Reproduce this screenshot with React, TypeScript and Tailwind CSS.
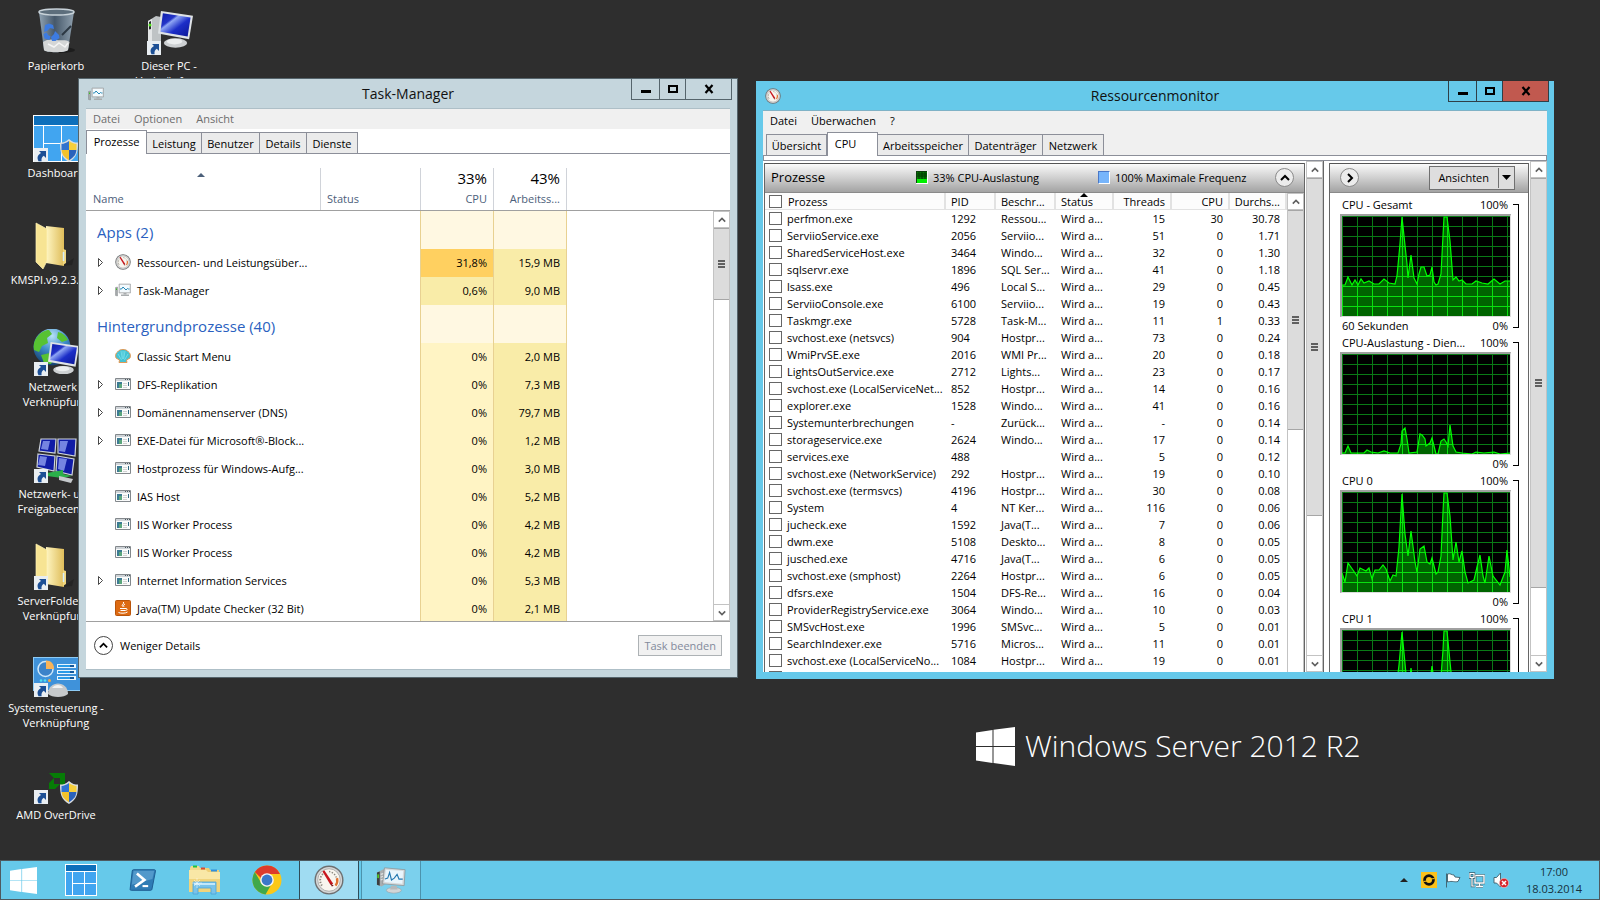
import { useId, useState } from "react";
import type { ReactNode } from "react";
import { clsx } from "clsx";

type IconProps = { className?: string };

/* ---------- Icons ---------- */

function ShortcutArrow() {
  return (
    <g>
      <rect x="2" y="33" width="14" height="14" fill="#e9eef2" />
      <path d="M7 36h7v7l-2.200-2.200c-2 1.200-2.600 3-2.200 5.400H6.500c-2-4-.5-6.500 2.500-8.200z" fill="#1c4f95" />
    </g>
  );
}

function Shield() {
  return (
    <g>
      <path d="M37 24c3 3 6 3.500 9 3.500 0 9-1 15-9 19.500-8-4.500-9-10.500-9-19.500 3 0 6-.5 9-3.500z" fill="#d9dde0" />
      <path d="M37 26c-2.500 2-5 2.700-7.500 2.900V35H37z" fill="#2f72cf" />
      <path d="M37 26c2.500 2 5 2.700 7.500 2.900V35H37z" fill="#f6cf3c" />
      <path d="M29.600 35H37v10.200C31.500 42 30 39 29.600 35z" fill="#f3c22c" />
      <path d="M44.400 35H37v10.200C42.500 42 44 39 44.400 35z" fill="#2a62bb" />
    </g>
  );
}

function RecycleBinIcon({ className }: IconProps) {
  const id = useId();
  return (
    <svg className={className} viewBox="0 0 48 48" aria-hidden="true">
      <defs>
        <linearGradient id={id} x1="0" x2="1">
          <stop offset="0" stopColor="#90a3b3" />
          <stop offset=".45" stopColor="#46586a" />
          <stop offset="1" stopColor="#8fa0ae" />
        </linearGradient>
      </defs>
      <ellipse cx="28" cy="42" rx="15" ry="3" fill="#1d1d1d" />
      <path d="M7 4l5 38c1 3 22 3 24 0l6-38z" fill={`url(#${id})`} />
      <path d="M11 34l1 8c1 3 22 3 24 0l1.500-8c-4-3-9-1-13-2s-10-1-13.500 2z" fill="#d4d6d6" />
      <path d="M16 36l6 3 5-4 6 4 3-4" stroke="#f4f4f4" fill="none" strokeWidth="1.500" />
      <path d="M39 18l-9 9" stroke="#2c3843" strokeWidth="2" />
      <path d="M13 17l4-1.500 4 1.500 1 4-4-1-3 3-3 1zM11.500 26l3-1.500 2 3 2 .5-1 4-5-1.500zM20 33l-1-4 3-3 1-3 4 4 .5 3-4 3z" fill="#3d7be0" />
      <ellipse cx="24.500" cy="4" rx="17.500" ry="3" fill="#5d6e7c" stroke="#c8d2d9" strokeWidth="1.500" />
    </svg>
  );
}

function Monitor({ x, y, w, h }: { x: number; y: number; w: number; h: number }) {
  const id = useId();
  return (
    <g transform={`translate(${x} ${y}) scale(${w / 36} ${h / 34})`}>
      <defs>
        <linearGradient id={id} x1="0" y1="0" x2="1" y2="1">
          <stop offset="0" stopColor="#0a1aa8" />
          <stop offset=".3" stopColor="#2434c8" />
          <stop offset=".36" stopColor="#8fa6f4" />
          <stop offset=".6" stopColor="#1c2ec8" />
          <stop offset="1" stopColor="#0b1694" />
        </linearGradient>
      </defs>
      <path d="M3 0l33 5-4 25L0 24z" fill="#dfe3e6" />
      <path d="M5 2.500l28.500 4.300L30.500 27 2.500 22z" fill={`url(#${id})`} />
      <ellipse cx="18" cy="34" rx="12" ry="5" fill="#cdd0d2" />
      <ellipse cx="17" cy="32.500" rx="8" ry="3" fill="#eceeef" />
    </g>
  );
}

function ComputerIcon({ className }: IconProps) {
  return (
    <svg className={className} viewBox="0 0 48 48" aria-hidden="true">
      <path d="M3 13l8-5 5 1v32l-5 2-8-3z" fill="#bfc3c5" />
      <path d="M3 13l4-2v29l-4-1z" fill="#e4e6e7" />
      <path d="M4 14l2-1v8l-2 .5z" fill="#2a2d2f" />
      <circle cx="5" cy="17" r="1.500" fill="#53e21b" />
      <Monitor x={13} y={3} w={35} h={32} />
      <ShortcutArrow />
    </svg>
  );
}

function DashboardIcon({ className }: IconProps) {
  return (
    <svg className={className} viewBox="0 0 48 48" aria-hidden="true">
      <rect x="1" y="0" width="47" height="47" fill="#fff" />
      <rect x="2" y="1" width="46" height="9" fill="#0d6fbb" />
      <path d="M2 11h9v35H2zM12 11h17v17H12zM30 11h18v17H30zM12 29h17v17H12zM30 29h18v17H30z" fill="#41a5f0" />
      <ShortcutArrow />
      <Shield />
    </svg>
  );
}

function FolderIcon({ className, shortcut }: IconProps & { shortcut?: boolean }) {
  const id = useId();
  return (
    <svg className={className} viewBox="0 0 48 48" aria-hidden="true">
      <defs>
        <linearGradient id={id} x1="0" x2="1">
          <stop offset="0" stopColor="#fdf3bd" />
          <stop offset="1" stopColor="#dfbd5a" />
        </linearGradient>
      </defs>
      <path d="M30 44l12-8-2 7z" fill="#242424" />
      <path d="M14 4l18 2v38l-18-3z" fill={`url(#${id})`} />
      <path d="M4 1l11 6v32l-4 8-7-7z" fill="#f7e493" stroke="#fff3b8" strokeWidth=".7" />
      <path d="M15 7l17 1v34l-17-3z" fill={`url(#${id})`} />
      <path d="M31 27l3 1v13l-3 2z" fill="#f0d67d" />
      <path d="M31.500 30v9" stroke="#d5effc" strokeWidth="1.500" />
      {shortcut && <ShortcutArrow />}
    </svg>
  );
}

function NetworkIcon({ className }: IconProps) {
  const id = useId();
  return (
    <svg className={className} viewBox="0 0 48 48" aria-hidden="true">
      <defs>
        <radialGradient id={id} cx=".5" cy=".2" r=".8">
          <stop offset="0" stopColor="#b8e2f7" />
          <stop offset=".5" stopColor="#3e8bc9" />
          <stop offset="1" stopColor="#14406f" />
        </radialGradient>
      </defs>
      <circle cx="20" cy="18" r="18.500" fill={`url(#${id})`} />
      <path d="M5 8c4-5 8-7 12-7l3 4-5 4 1 5-6 3-3 6-5-2c-1-5 0-9 3-13zM9 26l9-2 4 5-3 6-7-1zM26 3c5 1 8 4 10 8l-6 2-5-4z" fill="#57c232" />
      <Monitor x={16} y={13} w={31} h={28} />
      <ShortcutArrow />
    </svg>
  );
}

function SharingCenterIcon({ className }: IconProps) {
  return (
    <svg className={className} viewBox="0 0 48 48" aria-hidden="true">
      {["M9 3h15l-1 14-16-2z", "M26 3h18l-1 17-17-3z", "M6 18l17 2-1 15-17-4z", "M25 20l17 3-2 16-16-4z"].map((d) => (
        <path key={d} d={d} fill="#101ca6" stroke="#cfd5db" strokeWidth="1.200" />
      ))}
      <path d="M11 5h7l-2 9-7-1zM28 5h8l-3 11-6-1zM8 20l7 1-2 9-7-1zM27 22l8 1-3 12-6-2z" fill="#8f9ff0" opacity=".8" />
      <path d="M15 37l16-3v4l9 2-10 2-15-2z" fill="#2bb04b" />
      <path d="M27 40l14 3-2 4-12-3z" fill="#c5c9cc" />
      <ShortcutArrow />
    </svg>
  );
}

function ControlPanelIcon({ className }: IconProps) {
  return (
    <svg className={className} viewBox="0 0 48 48" aria-hidden="true">
      <rect x="1.500" y="7.500" width="47" height="33" fill="#3f92da" stroke="#8ecbf5" />
      <circle cx="13.500" cy="19" r="7.500" fill="#3c83c9" stroke="#cfe8fa" strokeWidth="1.500" />
      <path d="M14 19v-8.500c5 0 8 3 8 8.500z" fill="#f8b45a" />
      {[15, 21, 27].map((y) => (
        <g key={y}>
          <rect x="25" y={y - 1} width="19" height="4" fill="#e8f5fe" />
          <rect x="26" y={y} width="13" height="2" fill="#2b9be8" />
          <rect x="38" y={y} width="4" height="2" fill="#12579c" />
        </g>
      ))}
      <circle cx="9" cy="30.500" r="1.300" fill="#4fe0ef" />
      <circle cx="13" cy="30.500" r="1.300" fill="#4fe0ef" />
      <circle cx="17.500" cy="30.500" r="1.500" fill="#f5a93e" />
      <path d="M16 44c0-14 20-14 20 0-4 4-16 4-20 0z" fill="#c6c9cb" />
      <path d="M20 38c3-4 9-4 11 0z" fill="#f1f2f2" />
      <ShortcutArrow />
    </svg>
  );
}

function AmdIcon({ className }: IconProps) {
  return (
    <svg className={className} viewBox="0 0 48 48" aria-hidden="true">
      <path d="M17 16h16v16l-5-5v-6h-6zM17 26l5-5v6h6l-5 5h-6z" fill="#067c06" />
      <ShortcutArrow />
      <Shield />
    </svg>
  );
}

function GaugeIcon({ className }: IconProps) {
  return (
    <svg className={className} viewBox="0 0 32 32" aria-hidden="true">
      <circle cx="16" cy="16" r="15.500" fill="#6d6f70" />
      <circle cx="16" cy="16" r="14" fill="#d5d6d6" />
      <circle cx="16" cy="16" r="12" fill="#f8f5ee" stroke="#9c9d9e" strokeWidth=".8" />
      <path d="M8.500 22a9.500 9.500 0 0 1 1.500-13" fill="none" stroke="#8d8a80" strokeWidth="2" strokeDasharray="1.500 1.500" />
      <path d="M16 7a9.500 9.500 0 0 1 8 7" fill="none" stroke="#8d8a80" strokeWidth="1.500" strokeDasharray="1.500 1.500" />
      <path d="M24.500 14a9 9 0 0 1-1.500 8" fill="none" stroke="#e0702e" strokeWidth="2.500" />
      <path d="M9 7l2-1.500 9.500 14.500-3 1z" fill="#c8161d" />
      <path d="M17 19l4 3-2 1z" fill="#7c1013" />
    </svg>
  );
}

function PerfMonitorIcon({ className }: IconProps) {
  return (
    <svg className={className} viewBox="0 0 32 32" aria-hidden="true">
      <path d="M1 11l4-1v18l-4-1z" fill="#a4a8aa" stroke="#75797b" strokeWidth=".8" />
      <rect x="2" y="13" width="2" height="3" fill="#3ac41f" />
      <path d="M8 4h23v18H8z" fill="#d6d9da" stroke="#8b8f91" strokeWidth="1" />
      <path d="M10 6h19v14H10z" fill="#f3fafe" />
      <path d="M10 14h3l3-4 6 6 3-3 2 1h2" fill="none" stroke="#2386b5" strokeWidth="2" />
      <path d="M17 22h6v3h-6z" fill="#a9adaf" />
      <path d="M12 26.500h16" stroke="#a9adaf" strokeWidth="3" />
    </svg>
  );
}

function TaskManagerTaskbarIcon({ className }: IconProps) {
  return (
    <svg className={className} viewBox="0 0 32 32" aria-hidden="true">
      <path d="M1 8l8-4v17l-3 2-5-2z" fill="#a9adaf" />
      <path d="M1 8l3-1v15l-3-1z" fill="#3b3e40" />
      <path d="M5 10l3-1M5 13l3-1M5 16l3-1" stroke="#e4e6e7" strokeWidth="1.200" />
      <rect x="1.500" y="10" width="1.500" height="4" fill="#55e31f" />
      <path d="M9 3l22 2-1 17L7 20z" fill="#d6d9db" stroke="#85898b" strokeWidth=".7" />
      <path d="M10.500 5l18.500 1.500-1 13.500L9 18z" fill="#e9f5fc" />
      <path d="M9.500 15l3-1 2-6 2 8 3-2 3-4 2 5h4" fill="none" stroke="#2377b0" strokeWidth="1.200" />
      <ellipse cx="19" cy="27" rx="8" ry="3" fill="#d2d5d6" stroke="#999da0" strokeWidth=".6" />
      <path d="M16 22h6l1 4h-8z" fill="#b5b8ba" />
    </svg>
  );
}

function AppWindowIcon({ className }: IconProps) {
  return (
    <svg className={className} viewBox="0 0 16 16" aria-hidden="true">
      <path d="M.5 2.500h15v11H.5z" fill="#fafbfb" stroke="#83888c" />
      <rect x="1" y="3" width="14" height="2" fill="#cfd4d8" />
      <path d="M10 3h1v1h-1zM12 3h1v1h-1zM14 3h1v1h-1z" fill="#4d5960" />
      <rect x="2" y="6" width="5" height="6" fill="#3c7b93" />
      <rect x="4" y="8" width="3" height="4" fill="#5ba67c" />
      <path d="M8 7h4v1H8zM8 9h4v1H8zM8 11h4v1H8z" fill="#d2d2d2" />
      <rect x="13" y="6" width="1" height="4" fill="#2c6580" />
    </svg>
  );
}

function ShellIcon({ className }: IconProps) {
  return (
    <svg className={className} viewBox="0 0 16 16" aria-hidden="true">
      <path d="M4 14.500L4.500 12 1 10C0 7 1 5 2.500 4 4 2 6 1.500 8 1.500S12 2 13.500 4C15 5 16 7 15 10l-3.500 2 .5 2.500z" fill="#45c3d4" stroke="#e29a56" strokeWidth="1" />
      <path d="M6.500 12L3 6M7.300 11L6 3M8 11V3M8.700 11L10 3M9.500 12L13 6" stroke="#82e4ee" strokeWidth=".7" />
    </svg>
  );
}

function JavaIcon({ className }: IconProps) {
  return (
    <svg className={className} viewBox="0 0 16 16" aria-hidden="true">
      <rect x=".5" y=".5" width="15" height="15" rx="1" fill="#dd6a12" stroke="#b9540a" />
      <path d="M8.500 2c1 2-2.500 2.500-1 4.500M10 4c-2 1-1.500 2-1 3" stroke="#fff" fill="none" strokeWidth="1" />
      <path d="M5 8.500h6M5.500 10.500h5M11 8.500c2 0 1 2-.5 2M3.500 12.500c2 1 7 1 9-.5" stroke="#fff" fill="none" strokeWidth="1" />
    </svg>
  );
}

function WindowsLogo({ className }: IconProps) {
  return (
    <svg className={className} viewBox="0 0 39 39" fill="#fff" aria-hidden="true">
      <path d="M0 5.500L16.500 3v16H0zM17.500 2.800L39 0v19H17.500zM0 20h16.500v16L0 33.500zM17.500 20H39v19l-21.500-3z" />
    </svg>
  );
}

function DashboardTileIcon({ className }: IconProps) {
  return (
    <svg className={className} viewBox="0 0 32 32" aria-hidden="true">
      <rect width="32" height="32" fill="#fff" />
      <path d="M1 1h30v6H1z" fill="#0d6fbb" />
      <path d="M1 8h6v23H1zM8 8h11v11H8zM20 8h11v11H20zM8 20h11v11H8zM20 20h11v11H20z" fill="#41a5f0" />
    </svg>
  );
}

function PowerShellIcon({ className }: IconProps) {
  return (
    <svg className={className} viewBox="0 0 32 32" aria-hidden="true">
      <path d="M6 5h22c1 0 1.500.6 1.300 1.500L25.500 26c-.2.700-.8 1-1.500 1H3.500c-1 0-1.500-.6-1.200-1.500L4.500 6.500C4.600 5.500 5 5 6 5z" fill="#2f7cb5" stroke="#1c5a8f" />
      <path d="M6 6h22l-2 9-22 6z" fill="#6fb0dc" opacity=".55" />
      <path d="M9.500 9l8 7-10 7" fill="none" stroke="#fff" strokeWidth="2.800" />
      <path d="M15.500 22.500h6" stroke="#fff" strokeWidth="2.200" />
    </svg>
  );
}

function ExplorerIcon({ className }: IconProps) {
  return (
    <svg className={className} viewBox="0 0 32 32" aria-hidden="true">
      <path d="M1 4l1-2h8l1 2h8v3H1z" fill="#f2d98c" />
      <path d="M11 6l1-2h8l1 2h9v4H11z" fill="#efcf77" />
      <rect x="4" y="1.500" width="4" height="2" fill="#1ec43c" />
      <rect x="12" y="3.500" width="4" height="2" fill="#d94b32" />
      <rect x="22" y="5.500" width="6" height="2" fill="#2e8fe0" />
      <path d="M0 6h17l2 2h12v20H0z" fill="#f9e7a6" />
      <path d="M0 15h31v13H0z" fill="#f1d47c" />
      <path d="M4 18h23v12h-5v-6H9v6H4z" fill="#79c3ea" stroke="#4ba3d6" strokeWidth=".8" />
      <path d="M5 19h21v2H5z" fill="#c2e8fa" />
      <path d="M8 14v10M3 19h10M5 16l6 6M11 16l-6 6" stroke="#fff" strokeWidth=".7" opacity=".7" />
    </svg>
  );
}

function ChromeIcon({ className }: IconProps) {
  return (
    <svg className={className} viewBox="0 0 32 32" aria-hidden="true">
      <circle cx="16" cy="16" r="14.500" fill="#fbc817" />
      <path d="M16 1.500A14.500 14.500 0 0 1 29 10H16a6.500 6.500 0 0 0-6 4L3.800 8A14.500 14.500 0 0 1 16 1.500z" fill="#dd3b2b" />
      <path d="M3.800 8a14.500 14.500 0 0 0 10.700 22.400L20 21a6.500 6.500 0 0 1-9.800-2z" fill="#40a84b" />
      <circle cx="16" cy="16" r="6.800" fill="#f4f6f7" />
      <circle cx="16" cy="16" r="5.400" fill="#3b78c9" />
    </svg>
  );
}

function ChevronGlyph({ dir, className }: { dir: "up" | "down" | "right"; className?: string }) {
  const d = { up: "M1 7l4-4 4 4", down: "M1 3l4 4 4-4", right: "M3 1l4 4-4 4" }[dir];
  return (
    <svg className={className} viewBox="0 0 10 10" fill="none" stroke="currentColor" strokeWidth="2" aria-hidden="true">
      <path d={d} />
    </svg>
  );
}

/* ---------- Shared window parts ---------- */

function CaptionButtons({ active }: { active?: boolean }) {
  const line = active ? "border-[#2f3f47]" : "border-[#55646b]";
  return (
    <div className={clsx("mr-[5px] flex h-[21px] w-[101px] justify-self-end border-x border-b", line)}>
      <button aria-label="Minimieren" className={clsx("flex w-7 items-center justify-center border-r", line)}>
        <svg className="h-[10px] w-[10px]" viewBox="0 0 10 10" aria-hidden="true"><path d="M0 6h10v3H0z" /></svg>
      </button>
      <button aria-label="Maximieren" className={clsx("flex w-[26px] items-center justify-center border-r", line)}>
        <svg className="h-[10px] w-[10px]" viewBox="0 0 10 10" aria-hidden="true"><path d="M1 2h8v6H1z" fill="none" stroke="#000" strokeWidth="2" /></svg>
      </button>
      <button aria-label="Schließen" className={clsx("flex flex-1 items-center justify-center", active && "bg-[#c1594f]")}>
        <svg className="h-[10px] w-[10px]" viewBox="0 0 10 10" aria-hidden="true"><path d="M1.500 1l7 8M8.500 1l-7 8" stroke="#000" strokeWidth="2.200" /></svg>
      </button>
    </div>
  );
}

function TitleBar({ title, icon, active }: { title: string; icon: ReactNode; active?: boolean }) {
  return (
    <header className="grid h-[29px] shrink-0 grid-cols-[106px_1fr_106px]">
      <div className="flex items-center pl-[9px]">{icon}</div>
      <h1 className="self-center text-center text-[14px] leading-5 text-[#111]">{title}</h1>
      <CaptionButtons active={active} />
    </header>
  );
}

function ScrollBar({ thumb, down = true, className }: { thumb: string; down?: boolean; className?: string }) {
  const btn = "flex h-[17px] shrink-0 items-center justify-center border border-[#c3c3c3] bg-white text-[#606060]";
  return (
    <div className={clsx("flex w-[17px] shrink-0 flex-col border-x border-[#c3c3c3] bg-white", className)}>
      <button aria-label="Nach oben" className={clsx(btn, "border-x-0")}>
        <ChevronGlyph dir="up" className="h-2 w-2" />
      </button>
      <div className={clsx("flex shrink-0 flex-col items-center justify-center gap-px border-y border-[#a6a6a6] bg-[#dcdcdc]", thumb)}>
        <span className="h-[2px] w-[7px] bg-[#606060]" />
        <span className="h-[2px] w-[7px] bg-[#606060]" />
        <span className="h-[2px] w-[7px] bg-[#606060]" />
      </div>
      {down && (
        <button aria-label="Nach unten" className={clsx(btn, "mt-auto border-x-0")}>
          <ChevronGlyph dir="down" className="h-2 w-2" />
        </button>
      )}
    </div>
  );
}

type Tab = { label: string; width: string };

function Tabs({ tabs, initial }: { tabs: Tab[]; initial: string }) {
  const [current, setCurrent] = useState(initial);
  return (
    <div role="tablist" className="flex items-end">
      {tabs.map((tab) => (
        <button
          key={tab.label}
          role="tab"
          aria-selected={current === tab.label}
          onClick={() => setCurrent(tab.label)}
          className={clsx(
            "whitespace-nowrap border border-b-0 border-[#8c8f99]",
            tab.width,
            current === tab.label ? "relative z-10 -mb-px h-6 bg-white pb-[3px]" : "-ml-px h-[21px] bg-[#ebebeb]",
          )}
        >
          {tab.label}
        </button>
      ))}
    </div>
  );
}

/* ---------- Task manager ---------- */

type Task = { name: string; cpu: string; mem: string; icon?: "gauge" | "perf" | "shell" | "java"; expandable?: boolean; hot?: boolean; busy?: boolean };

const taskGroups: { title: string; tasks: Task[] }[] = [
  {
    title: "Apps (2)",
    tasks: [
      { name: "Ressourcen- und Leistungsüber...", cpu: "31,8%", mem: "15,9 MB", icon: "gauge", expandable: true, hot: true },
      { name: "Task-Manager", cpu: "0,6%", mem: "9,0 MB", icon: "perf", expandable: true, busy: true },
    ],
  },
  {
    title: "Hintergrundprozesse (40)",
    tasks: [
      { name: "Classic Start Menu", cpu: "0%", mem: "2,0 MB", icon: "shell" },
      { name: "DFS-Replikation", cpu: "0%", mem: "7,3 MB", expandable: true },
      { name: "Domänennamenserver (DNS)", cpu: "0%", mem: "79,7 MB", expandable: true },
      { name: "EXE-Datei für Microsoft®-Block...", cpu: "0%", mem: "1,2 MB", expandable: true },
      { name: "Hostprozess für Windows-Aufg...", cpu: "0%", mem: "3,0 MB" },
      { name: "IAS Host", cpu: "0%", mem: "5,2 MB" },
      { name: "IIS Worker Process", cpu: "0%", mem: "4,2 MB" },
      { name: "IIS Worker Process", cpu: "0%", mem: "4,2 MB" },
      { name: "Internet Information Services", cpu: "0%", mem: "5,3 MB", expandable: true },
      { name: "Java(TM) Update Checker (32 Bit)", cpu: "0%", mem: "2,1 MB", icon: "java" },
    ],
  },
];

const taskIcons = { gauge: GaugeIcon, perf: PerfMonitorIcon, shell: ShellIcon, java: JavaIcon };

function TaskRow({ task }: { task: Task }) {
  const Icon = task.icon ? taskIcons[task.icon] : AppWindowIcon;
  return (
    <tr className="h-7">
      <td className="pb-[2px] pl-[10px]">
        <div className="flex items-center whitespace-nowrap">
          <span className="flex w-[19px] shrink-0 items-center">
            {task.expandable && (
              <button aria-label={`${task.name} erweitern`}>
                <svg className="h-[9px] w-[9px]" viewBox="0 0 9 9" aria-hidden="true">
                  <path d="M2.500 .5v8l4-4z" fill="#fff" stroke="#333" strokeWidth=".9" />
                </svg>
              </button>
            )}
          </span>
          <Icon className="mr-[6px] h-4 w-4 shrink-0" />
          {task.name}
        </div>
      </td>
      <td />
      <td
        className={clsx(
          "border-l border-[#e8d192] pr-[6px] pb-[2px] text-right",
          task.hot ? "bg-[#ffd060]" : task.busy ? "bg-[#f9eca8]" : "bg-[#fff4c4]",
        )}
      >
        {task.cpu}
      </td>
      <td className="border-x border-[#e8d192] bg-[#f9eca8] pr-[6px] pb-[2px] text-right">{task.mem}</td>
    </tr>
  );
}

const taskColumn = "flex flex-col justify-end border-r border-[#d0d3d9] pb-1 text-[#4c607a]";

function TaskManager() {
  return (
    <section className="absolute top-[78px] left-[78px] flex h-[600px] w-[660px] flex-col border border-[#55646b] bg-[#c5d6dd]">
      <TitleBar title="Task-Manager" icon={<PerfMonitorIcon className="h-4 w-4" />} />
      <div className="mx-[7px] mb-[7px] flex min-h-0 flex-1 flex-col border-y border-[#aebfc7] bg-white">
        <nav className="flex h-5 shrink-0 items-center gap-[14px] bg-[#f0f0f0] px-[7px] pb-[2px] text-[#6d6d6d]">
          <button>Datei</button>
          <button>Optionen</button>
          <button>Ansicht</button>
        </nav>
        <div className="h-[25px] shrink-0 border-b border-[#8c8f99] pt-[1px]">
          <Tabs
            initial="Prozesse"
            tabs={[
              { label: "Prozesse", width: "w-[61px]" },
              { label: "Leistung", width: "w-[56px]" },
              { label: "Benutzer", width: "w-[59px]" },
              { label: "Details", width: "w-[48px]" },
              { label: "Dienste", width: "w-[52px]" },
            ]}
          />
        </div>

        <div className="flex h-[57px] shrink-0 border-b border-[#a0a0a0] pt-[14px]">
          <button className={clsx(taskColumn, "relative w-[235px] items-start pl-[7px]")}>
            <svg className="absolute top-[5px] left-[111px] h-1 w-2" viewBox="0 0 8 4" aria-hidden="true">
              <path d="M0 4l4-4 4 4z" fill="#4c607a" />
            </svg>
            Name
          </button>
          <button className={clsx(taskColumn, "w-[100px] items-start pl-[6px]")}>Status</button>
          <button className={clsx(taskColumn, "w-[73px] items-end pr-[6px]")}>
            <span className="pb-px text-[15px] leading-6 text-black">33%</span>
            CPU
          </button>
          <button className={clsx(taskColumn, "w-[73px] items-end pr-[6px]")}>
            <span className="pb-px text-[15px] leading-6 text-black">43%</span>
            Arbeitss...
          </button>
        </div>

        <div className="flex min-h-0 flex-1 justify-between overflow-hidden">
          <div className="overflow-hidden">
            <table className="w-[481px] table-fixed border-separate border-spacing-0">
              <colgroup>
                <col className="w-[234px]" />
                <col className="w-[100px]" />
                <col className="w-[73px]" />
                <col className="w-[74px]" />
              </colgroup>
              {taskGroups.map((group) => (
                <tbody key={group.title}>
                  <tr className="h-[38px]">
                    <th colSpan={2} className="pt-1 pl-[11px] text-left text-[15px] font-normal text-[#2a5fc0]">
                      {group.title}
                    </th>
                    <td className="border-l border-[#e8d192] bg-[#fff8e2]" />
                    <td className="border-x border-[#e8d192] bg-[#fff8e2]" />
                  </tr>
                  {group.tasks.map((task, i) => (
                    <TaskRow key={i} task={task} />
                  ))}
                </tbody>
              ))}
            </table>
          </div>
          <ScrollBar thumb="h-[72px]" />
        </div>

        <footer className="flex h-12 shrink-0 items-center justify-between border-t border-[#a0a0a0] px-2">
          <button className="flex items-center gap-[7px]">
            <span className="flex h-[19px] w-[19px] items-center justify-center rounded-full border border-[#444]">
              <ChevronGlyph dir="up" className="h-[9px] w-[9px]" />
            </span>
            Weniger Details
          </button>
          <button disabled className="h-[21px] border border-[#adb2b5] bg-[#f1f1f1] px-[5px] leading-4 text-[#838a9c]">
            Task beenden
          </button>
        </footer>
      </div>
    </section>
  );
}

/* ---------- Resource monitor ---------- */

const processes = [
  ["perfmon.exe", "1292", "Ressou...", "15", "30", "30.78"],
  ["ServiioService.exe", "2056", "Serviio...", "51", "0", "1.71"],
  ["SharedServiceHost.exe", "3464", "Windo...", "32", "0", "1.30"],
  ["sqlservr.exe", "1896", "SQL Ser...", "41", "0", "1.18"],
  ["lsass.exe", "496", "Local S...", "29", "0", "0.45"],
  ["ServiioConsole.exe", "6100", "Serviio...", "19", "0", "0.43"],
  ["Taskmgr.exe", "5728", "Task-M...", "11", "1", "0.33"],
  ["svchost.exe (netsvcs)", "904", "Hostpr...", "73", "0", "0.24"],
  ["WmiPrvSE.exe", "2016", "WMI Pr...", "20", "0", "0.18"],
  ["LightsOutService.exe", "2712", "Lights...", "23", "0", "0.17"],
  ["svchost.exe (LocalServiceNet...", "852", "Hostpr...", "14", "0", "0.16"],
  ["explorer.exe", "1528", "Windo...", "41", "0", "0.16"],
  ["Systemunterbrechungen", "-", "Zurück...", "-", "0", "0.14"],
  ["storageservice.exe", "2624", "Windo...", "17", "0", "0.14"],
  ["services.exe", "488", "", "5", "0", "0.12"],
  ["svchost.exe (NetworkService)", "292", "Hostpr...", "19", "0", "0.10"],
  ["svchost.exe (termsvcs)", "4196", "Hostpr...", "30", "0", "0.08"],
  ["System", "4", "NT Ker...", "116", "0", "0.06"],
  ["jucheck.exe", "1592", "Java(T...", "7", "0", "0.06"],
  ["dwm.exe", "5108", "Deskto...", "8", "0", "0.05"],
  ["jusched.exe", "4716", "Java(T...", "6", "0", "0.05"],
  ["svchost.exe (smphost)", "2264", "Hostpr...", "6", "0", "0.05"],
  ["dfsrs.exe", "1504", "DFS-Re...", "16", "0", "0.04"],
  ["ProviderRegistryService.exe", "3064", "Windo...", "10", "0", "0.03"],
  ["SMSvcHost.exe", "1996", "SMSvc...", "5", "0", "0.01"],
  ["SearchIndexer.exe", "5716", "Micros...", "11", "0", "0.01"],
  ["svchost.exe (LocalServiceNo...", "1084", "Hostpr...", "19", "0", "0.01"],
];

type ChartProps = { label: string; left?: string; right?: string; points: string };

const charts: ChartProps[] = [
  {
    label: "CPU - Gesamt",
    left: "60 Sekunden",
    right: "0%",
    points:
      "0,69 3,69 6,61 10,69 13,64 16,69 19,63 22,67 27,65 32,68 37,68 42,63 47,67 53,68 55,60 58,28 60,1 62,20 65,48 66,62 69,39 72,62 75,68 77,58 79,51 82,51 85,60 88,59 90,51 92,66 94,69 96,68 99,58 101,20 102,1 105,1 108,25 111,64 114,61 117,65 120,64 124,68 130,68 134,65 140,67 146,68 152,63 158,68 163,65 168,65",
  },
  {
    label: "CPU-Auslastung - Dien...",
    right: "0%",
    points:
      "0,99 3,99 6,92 9,99 22,99 25,96 29,98 36,99 42,97 48,99 56,99 59,90 60,77 63,74 65,85 67,99 75,98 78,80 80,81 83,85 84,92 88,89 90,84 92,92 94,100 96,100 99,87 102,85 104,88 106,92 108,71 111,92 114,98 120,99 130,100 134,98 142,99 152,98 158,100 168,99",
  },
  {
    label: "CPU 0",
    right: "0%",
    points:
      "0,81 3,90 6,71 11,78 15,84 18,76 24,79 27,76 30,87 33,78 37,78 41,73 44,77 48,89 51,83 54,84 57,55 60,2 63,42 66,64 69,39 73,70 75,80 78,57 82,54 85,70 88,72 90,66 94,82 96,80 99,64 101,20 102,1 105,1 108,24 111,68 114,50 117,70 120,59 123,80 126,91 132,88 135,75 138,63 141,84 143,91 147,64 151,84 158,93 163,80 165,58 168,85",
  },
  {
    label: "CPU 1",
    points: "0,80 40,76 54,60 57,35 60,2 64,44 67,55 69,38 72,60 87,60 90,36 92,50 98,60 101,20 102,1 105,1 109,42 115,70 168,75",
  },
];

function Chart({ label, left, right, points }: ChartProps) {
  const id = useId();
  const grid =
    Array.from({ length: 12 }, (_, i) => `M${i * 15 + 0.5} 0V100`).join("") +
    Array.from({ length: 10 }, (_, i) => `M0 ${i * 10 + 0.5}H168`).join("");
  const area = `0,100 ${points} 168,100`;
  return (
    <figure className="flex h-[138px] shrink-0 gap-[2px] pl-[10px] leading-[17px]">
      <div className="w-[171px]">
        <figcaption className="flex justify-between pr-[3px] pl-[2px]">
          <span className="whitespace-nowrap">{label}</span>
          <span>100%</span>
        </figcaption>
        <svg className="mt-px h-[103px] w-full border-t-2 border-l-2 border-[#a0a0a0] border-r border-b border-r-[#dcdcdc] border-b-[#dcdcdc] bg-black" viewBox="0 0 168 100" preserveAspectRatio="none" aria-label={label}>
          <clipPath id={id}>
            <polygon points={area} />
          </clipPath>
          <path d={grid} stroke="#0a7a16" />
          <polygon points={area} fill="#006400" />
          <path d={grid} stroke="#0ae010" clipPath={`url(#${id})`} />
          <polyline points={points} fill="none" stroke="#00ff00" strokeWidth="1.200" />
        </svg>
        {right && (
          <div className="flex justify-between pr-[3px] pl-[2px]">
            <span>{left}</span>
            <span>{right}</span>
          </div>
        )}
      </div>
      <div className="mt-2 h-[124px] w-[6px] border-y border-r border-black" />
    </figure>
  );
}

const panelHeader = "flex h-[30px] shrink-0 items-center border-y border-t-[#555] border-b-[#8a8a8a] bg-linear-to-b from-[#fafafa] via-[#cfcfcf] to-[#a3a3a3]";
const roundButton = "flex h-[19px] w-[19px] items-center justify-center rounded-full border border-[#8a8a8a] bg-[#ececec]";

function ProcessTable() {
  const head = "h-[17px] border-r-2 border-b border-[#e2e2e2] bg-[#fcfcfc] font-normal whitespace-nowrap";
  const right = "pr-[7px] text-right";
  const checkbox = "block h-[13px] w-[13px] shrink-0 appearance-none border border-[#666] bg-white";
  return (
    <table className="w-[522px] shrink-0 table-fixed border-separate border-spacing-0">
      <colgroup>
        <col className="w-[181px]" />
        <col className="w-[50px]" />
        <col className="w-[60px]" />
        <col className="w-[58px]" />
        <col className="w-[58px]" />
        <col className="w-[58px]" />
        <col className="w-[57px]" />
      </colgroup>
      <thead>
        <tr>
          <th className={clsx(head, "pl-1 text-left")}>
            <label className="flex items-center gap-[6px]">
              <input type="checkbox" className={checkbox} />
              Prozess
            </label>
          </th>
          <th className={clsx(head, "pl-[5px] text-left")}>PID</th>
          <th className={clsx(head, "pl-[5px] text-left")}>Beschr...</th>
          <th className={clsx(head, "relative pl-[5px] text-left")}>
            <svg className="absolute top-0 left-6 h-[4px] w-2" viewBox="0 0 8 4" aria-hidden="true">
              <path d="M0 4l4-4 4 4z" />
            </svg>
            Status
          </th>
          <th className={clsx(head, "pr-[5px] text-right")}>Threads</th>
          <th className={clsx(head, "pr-[5px] text-right")}>CPU</th>
          <th className={clsx(head, "pr-[5px] text-right")}>Durchs...</th>
        </tr>
      </thead>
      <tbody>
        {processes.map(([name, pid, desc, threads, cpu, avg]) => (
          <tr key={name + pid} className="h-[17px] whitespace-nowrap">
            <td className="pl-1">
              <label className="flex items-center gap-[5px]">
                <input type="checkbox" className={checkbox} />
                {name}
              </label>
            </td>
            <td className="pl-[5px]">{pid}</td>
            <td className="pl-[5px]">{desc}</td>
            <td className="pl-[5px]">Wird a...</td>
            <td className={right}>{threads}</td>
            <td className={right}>{cpu}</td>
            <td className={right}>{avg}</td>
          </tr>
        ))}
        <tr className="h-[17px]">
          <td className="pl-1">
            <input type="checkbox" aria-label="Prozess" className={checkbox} />
          </td>
        </tr>
      </tbody>
    </table>
  );
}

function ResourceMonitor() {
  return (
    <section className="absolute top-[81px] left-[756px] flex h-[598px] w-[798px] flex-col bg-[#66c9ea]">
      <TitleBar title="Ressourcenmonitor" icon={<GaugeIcon className="h-4 w-4" />} active />
      <div className="mx-[7px] mb-[7px] flex min-h-0 flex-1 flex-col border-t border-[#7fb2c6] bg-[#f0f0f0]">
        <nav className="flex h-5 shrink-0 items-center gap-[14px] px-[7px] pb-[2px]">
          <button>Datei</button>
          <button>Überwachen</button>
          <button>?</button>
        </nav>
        <div className="h-6 shrink-0 pt-px pl-1">
          <Tabs
            initial="CPU"
            tabs={[
              { label: "Übersicht", width: "w-[61px]" },
              { label: "CPU", width: "w-[51px] pr-[14px]" },
              { label: "Arbeitsspeicher", width: "w-[92px]" },
              { label: "Datenträger", width: "w-[75px]" },
              { label: "Netzwerk", width: "w-[62px]" },
            ]}
          />
        </div>
        <div className="h-[6px] shrink-0 border border-[#8c8f99] bg-white" />

        <div className="flex min-h-0 flex-1 overflow-hidden bg-white pl-px">
          <div className="flex min-w-0 flex-1 flex-col overflow-hidden pt-[2px] pr-px">
            <div className="flex min-h-0 flex-1 flex-col border-x border-[#666]">
              <div className={clsx(panelHeader, "pr-[10px] pb-px pl-[6px]")}>
                <h2 className="w-[145px] text-[13px]">Prozesse</h2>
                <div className="flex w-[182px] items-center gap-[5px]">
                  <svg className="h-[13px] w-3" viewBox="0 0 12 13" aria-hidden="true">
                    <path d="M0 0h12v13H0z" fill="#fff" />
                    <path d="M0 0h11v12H0z" fill="#0b3d0b" />
                    <path d="M1 1h10v7H1z" fill="#047a04" />
                    <path d="M1 8h10v4H1z" fill="#00f000" />
                    <path d="M1 3h10M1 5h10M3 1v7M6 1v7M9 1v7" stroke="#033803" />
                  </svg>
                  33% CPU-Auslastung
                </div>
                <div className="flex flex-1 items-center gap-[5px]">
                  <span className="h-[13px] w-3 border border-t-[#4a78c8] border-r-white border-b-white border-l-[#4a78c8] bg-[#77b5fb]" />
                  100% Maximale Frequenz
                </div>
                <button aria-label="Prozesse einklappen" className={roundButton}>
                  <ChevronGlyph dir="up" className="h-[10px] w-[10px]" />
                </button>
              </div>
              <div className="flex min-h-0 flex-1 overflow-hidden">
                <ProcessTable />
                <ScrollBar thumb="h-[220px]" down={false} />
              </div>
            </div>
          </div>
          <ScrollBar thumb="h-[338px]" />
          <div className="flex w-[207px] shrink-0 flex-col overflow-hidden border-l border-[#666] pt-[2px] pr-px pl-[5px]">
            <div className="flex min-h-0 flex-1 flex-col border-x border-[#666]">
              <div className={clsx(panelHeader, "justify-between pr-[13px] pb-px pl-[10px]")}>
                <button aria-label="Diagramme ausblenden" className={roundButton}>
                  <ChevronGlyph dir="right" className="h-[10px] w-[10px]" />
                </button>
                <button className="flex h-6 items-center gap-[9px] border border-[#707070] bg-[#dedede] pr-[3px] pl-2">
                  Ansichten
                  <span className="flex h-5 items-center border-l border-[#707070] pl-[3px]">
                    <svg className="h-[5px] w-[9px]" viewBox="0 0 9 5" aria-hidden="true">
                      <path d="M0 0h9L4.500 5z" />
                    </svg>
                  </span>
                </button>
              </div>
              <div className="flex min-h-0 flex-1 flex-col overflow-hidden pt-[3px]">
                {charts.map((chart) => (
                  <Chart key={chart.label} {...chart} />
                ))}
              </div>
            </div>
          </div>
          <ScrollBar thumb="h-[410px]" />
        </div>
      </div>
    </section>
  );
}

/* ---------- Desktop ---------- */

const shortcuts = [
  { lines: ["Papierkorb"], icon: <RecycleBinIcon className="h-12 w-12" /> },
  { lines: ["Dashboard"], icon: <DashboardIcon className="h-12 w-12" /> },
  { lines: ["KMSPI.v9.2.3.final"], icon: <FolderIcon className="h-12 w-12" /> },
  { lines: ["Netzwerk -", "Verknüpfung"], icon: <NetworkIcon className="h-12 w-12" /> },
  { lines: ["Netzwerk- und", "Freigabecenter"], icon: <SharingCenterIcon className="h-12 w-12" /> },
  { lines: ["ServerFolders -", "Verknüpfung"], icon: <FolderIcon className="h-12 w-12" shortcut /> },
  { lines: ["Systemsteuerung -", "Verknüpfung"], icon: <ControlPanelIcon className="h-12 w-12" /> },
  { lines: ["AMD OverDrive"], icon: <AmdIcon className="h-12 w-12" /> },
  { lines: ["Dieser PC -", "Verknüpfung"], icon: <ComputerIcon className="h-12 w-12" /> },
];

const pinned = [
  { label: "Dashboard", icon: <DashboardTileIcon className="h-8 w-8" /> },
  { label: "PowerShell", icon: <PowerShellIcon className="h-[30px] w-[30px]" /> },
  { label: "Explorer", icon: <ExplorerIcon className="h-8 w-8" /> },
  { label: "Chrome", icon: <ChromeIcon className="h-8 w-8" /> },
  { label: "Ressourcenmonitor", icon: <GaugeIcon className="h-[30px] w-[30px]" />, state: "border-x border-[#2f4c58] bg-[#a0dcf2]" },
  { label: "Task-Manager", icon: <TaskManagerTaskbarIcon className="h-[30px] w-[30px]" />, state: "border-x border-[#4b93ad] bg-[#7bd0ed]" },
];

function Taskbar() {
  return (
    <footer className="flex h-10 shrink-0 items-stretch border border-[#4e5a60] bg-[#66c9ea]">
      <button aria-label="Start" className="flex w-[49px] items-center pl-[9px]">
        <WindowsLogo className="h-[27px] w-[27px]" />
      </button>
      {pinned.map((item) => (
        <button key={item.label} aria-label={item.label} className="flex w-[62px] px-px">
          <span className={clsx("flex h-full w-full items-center justify-center", item.state)}>{item.icon}</span>
        </button>
      ))}
      <div className="ml-auto flex items-center gap-2 pr-2">
        <button aria-label="Ausgeblendete Symbole" className="mr-[5px]">
          <svg className="h-1 w-2" viewBox="0 0 8 4" aria-hidden="true">
            <path d="M0 4l4-4 4 4z" fill="#222" />
          </svg>
        </button>
        <svg className="h-4 w-4" viewBox="0 0 16 16" aria-hidden="true">
          <path d="M0 0h16v16H0z" fill="#fbc21b" />
          <circle cx="8" cy="8" r="4.400" fill="none" stroke="#111" strokeWidth="2.800" />
          <path d="M2.500 9.500L6 9M13.500 6.500L10 7" stroke="#fbc21b" strokeWidth="1.200" />
        </svg>
        <svg className="h-4 w-4" viewBox="0 0 16 16" aria-hidden="true">
          <path d="M1.500 1.500v14M2.500 2c3-1 4 1 6.500 1l1 2 5 .5-2 4c-4 1-5-1-10.500.5z" fill="#fff" stroke="#3d5c69" strokeWidth=".9" />
        </svg>
        <svg className="h-4 w-4" viewBox="0 0 16 16" fill="none" aria-hidden="true">
          <path d="M6 3.500h9v7.500H6zM10.500 11v3M7 14.500h7" stroke="#3d5c69" strokeWidth="2.600" />
          <path d="M6 3.500h9v7.500H6zM10.500 11v3M7 14.500h7" stroke="#fff" strokeWidth="1.400" />
          <path d="M1 1.500h4v4H1zM3 6v8h3" fill="#66c9ea" stroke="#3d5c69" strokeWidth="2.400" />
          <path d="M1 1.500h4v4H1zM3 6v8h3" stroke="#fff" strokeWidth="1.200" />
        </svg>
        <svg className="h-4 w-4" viewBox="0 0 16 16" aria-hidden="true">
          <path d="M1 5.500h2.500L7.500 1v14L3.500 11H1z" fill="#fff" stroke="#3d5c69" strokeWidth=".9" />
          <circle cx="11" cy="11" r="4.700" fill="#d8242c" stroke="#f5d5d5" strokeWidth=".6" />
          <path d="M9 9l4 4M13 9l-4 4" stroke="#fff" strokeWidth="1.500" />
        </svg>
        <button className="w-[74px] text-center leading-[17px] text-[#16313d]">
          <time className="block">17:00</time>
          <time className="block">18.03.2014</time>
        </button>
      </div>
    </footer>
  );
}

export default function App() {
  return (
    <div className="flex h-screen w-full flex-col overflow-hidden bg-[#2e2e2e] font-['Open_Sans',sans-serif] text-[11px] leading-[15px] text-black">
      <main className="relative min-h-0 flex-1 overflow-hidden">
        <ul className="grid w-max auto-cols-[113px] grid-flow-col grid-rows-[repeat(8,107px)]">
          {shortcuts.map((item) => (
            <li key={item.lines[0]}>
              <a href="#" className="flex w-[112px] flex-col items-center pt-2 text-white">
                {item.icon}
                <span className="mt-[2px] text-center">
                  {item.lines.map((line) => (
                    <span key={line} className="block whitespace-nowrap">{line}</span>
                  ))}
                </span>
              </a>
            </li>
          ))}
        </ul>

        <div className="absolute top-[722px] left-[976px] flex items-center gap-[10px]">
          <WindowsLogo className="h-[39px] w-[39px]" />
          <span className="text-[30px] leading-[48px] font-light whitespace-nowrap text-white">Windows Server 2012 R2</span>
        </div>

        <TaskManager />
        <ResourceMonitor />
      </main>
      <Taskbar />
    </div>
  );
}
